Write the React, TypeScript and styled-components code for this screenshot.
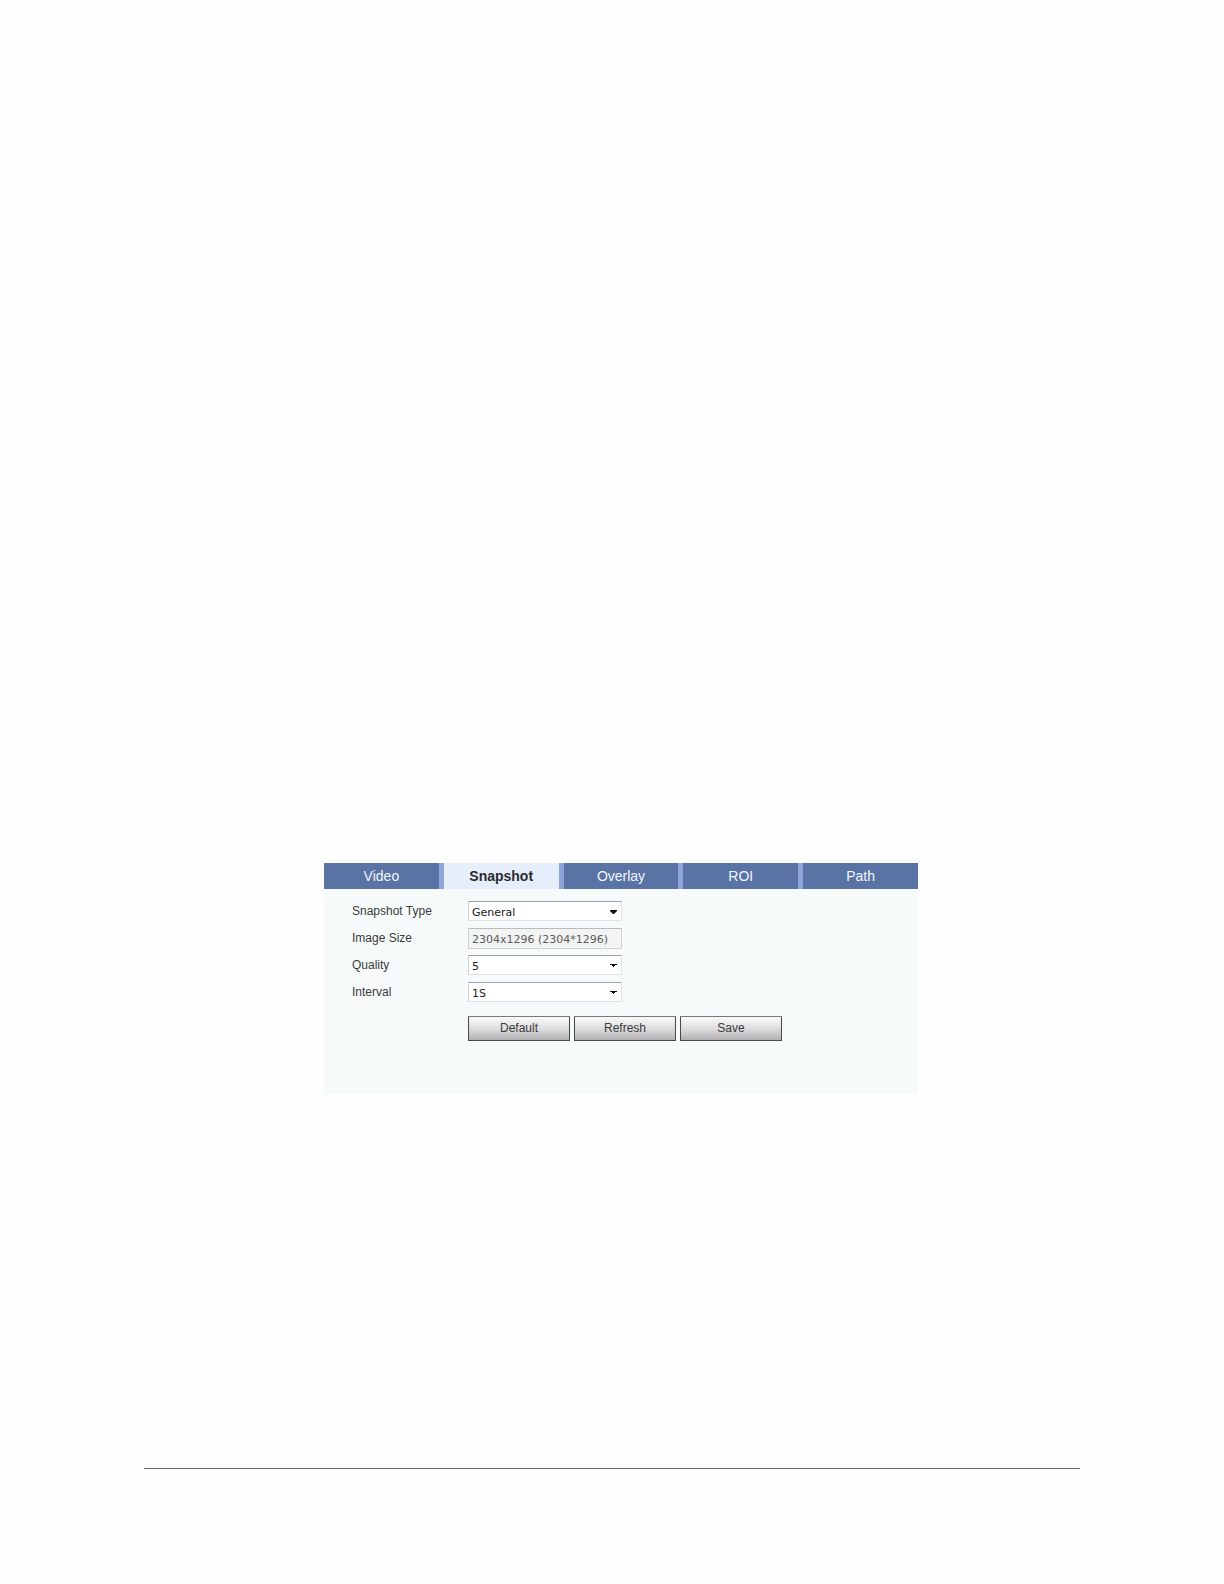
import { useState } from 'react';
import styled, { createGlobalStyle } from 'styled-components';

const GlobalStyle = createGlobalStyle`
  * {
    box-sizing: border-box;
  }

  body {
    margin: 0;
    background: #fefefe;
    color: #3a3a3a;
    font-family: 'Liberation Sans', Arial, sans-serif;
    font-size: 12px;
  }
`;

const Page = styled.div`
  min-height: 100vh;
  display: flex;
  flex-direction: column;
  padding: 863px 144px 115px;
`;

const Content = styled.main`
  flex: 1;
  padding: 0 162px 0 180px;
`;

const Footer = styled.footer`
  border-top: 1px solid #666;
`;

const TabBar = styled.div`
  display: grid;
  grid-template-columns: repeat(5, 1fr);
  gap: 5px;
  background: #8fa4da;
`;

const Tab = styled.button<{ $active: boolean }>`
  height: 26px;
  border: 0;
  padding: 0;
  background: ${({ $active }) => ($active ? '#e6eefb' : '#5973a5')};
  color: ${({ $active }) => ($active ? '#2c2c2c' : '#f1f5fc')};
  font-family: inherit;
  font-size: 14px;
  font-weight: ${({ $active }) => ($active ? 700 : 400)};
  cursor: pointer;
`;

const Panel = styled.form`
  background: #f6fafb;
  padding: 12px 28px 53px;
`;

const Row = styled.div`
  display: grid;
  grid-template-columns: 116px 154px;
  min-height: 21px;
  margin-bottom: 6px;
`;

const Label = styled.label`
  line-height: 20px;
`;

const SelectBox = styled.div`
  position: relative;
  height: 20px;
`;

const Select = styled.select`
  appearance: none;
  width: 100%;
  height: 20px;
  border: 1px solid #dfe3e8;
  border-top-color: #a0a3a9;
  border-left-color: #cfd2d8;
  border-radius: 1px;
  background: #fff;
  color: #1c1c1c;
  padding: 2px 20px 0 3px;
  font-family: 'DejaVu Sans', Verdana, sans-serif;
  font-size: 11px;
`;

const Arrow = styled.svg`
  position: absolute;
  right: 5px;
  top: 9px;
  pointer-events: none;
`;

const Input = styled.input`
  width: 100%;
  height: 21px;
  border: 1px solid #cfd2d4;
  border-top-color: #b9bcbe;
  border-radius: 1px;
  background: #f2f3f3;
  color: #5c5c5c;
  padding: 2px 3px 0;
  font-family: 'DejaVu Sans', Verdana, sans-serif;
  font-size: 11px;
`;

const Actions = styled.div`
  display: flex;
  gap: 4px;
  margin: 13px 0 0 116px;
`;

const Button = styled.button`
  width: 102px;
  height: 25px;
  border: 1px solid #47484b;
  border-top-color: #77787b;
  border-radius: 1px;
  background: linear-gradient(#fafafa, #dedddf 50%, #b2b0b2);
  color: #3a3a3a;
  padding: 0 0 2px;
  font-family: inherit;
  font-size: 12px;
  cursor: pointer;
`;

const tabs = ['Video', 'Snapshot', 'Overlay', 'ROI', 'Path'];

type SelectRowProps = {
  id: string;
  label: string;
  options: string[];
  arrow?: string;
};

function SelectRow({ id, label, options, arrow = 'M0 0h7v1H5v1H4v1H3V2H2V1H0z' }: SelectRowProps) {
  return (
    <Row>
      <Label htmlFor={id}>{label}</Label>
      <SelectBox>
        <Select id={id}>
          {options.map((option) => (
            <option key={option}>{option}</option>
          ))}
        </Select>
        <Arrow width="7" height="4" viewBox="0 0 7 4" aria-hidden="true">
          <path d={arrow} fill="#111" />
        </Arrow>
      </SelectBox>
    </Row>
  );
}

export default function App() {
  const [active, setActive] = useState('Snapshot');

  return (
    <Page>
      <GlobalStyle />
      <Content>
        <TabBar role="tablist">
          {tabs.map((tab) => (
            <Tab
              key={tab}
              type="button"
              role="tab"
              aria-selected={tab === active}
              $active={tab === active}
              onClick={() => setActive(tab)}
            >
              {tab}
            </Tab>
          ))}
        </TabBar>
        <Panel onSubmit={(e) => e.preventDefault()}>
          <SelectRow id="type" label="Snapshot Type" options={['General', 'Event']} arrow="M0 0h7v1L4 4H3L0 1z" />
          <Row>
            <Label htmlFor="size">Image Size</Label>
            <Input id="size" defaultValue="2304x1296 (2304*1296)" disabled />
          </Row>
          <SelectRow id="quality" label="Quality" options={['5', '4', '3', '2', '1']} />
          <SelectRow id="interval" label="Interval" options={['1S', '2S', '3S', '4S', '5S']} />
          <Actions>
            <Button type="reset">Default</Button>
            <Button type="button">Refresh</Button>
            <Button type="submit">Save</Button>
          </Actions>
        </Panel>
      </Content>
      <Footer />
    </Page>
  );
}
